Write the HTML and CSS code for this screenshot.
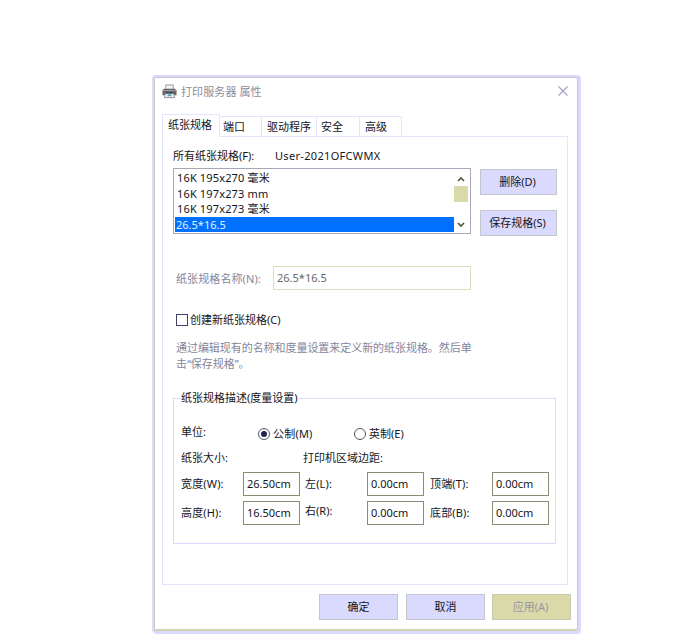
FILE: index.html
```html
<!DOCTYPE html>
<html lang="zh-CN">
<head>
<meta charset="utf-8">
<title>打印服务器 属性</title>
<link rel="stylesheet" href="styles.css">
</head>
<body>
<main class="dialog">
  <header class="titlebar">
    <svg class="printer" viewBox="0 0 16 16">
      <path d="M4 6V1h8v5" fill="#f5f5f7" stroke="#92929c"/>
      <path d="M2 5h12l1.500 2v5H.5V7z" fill="#62626a"/>
      <path d="M1 7h14" stroke="#a5a5ae"/>
      <path d="M3.500 10h9l1 4.500h-11z" fill="#e8edf2" stroke="#8d8d98"/>
      <path d="M4 9.500h8" stroke="#303038"/>
      <path d="M6 11h4v2H6z" fill="#4ba3bd"/>
    </svg>
    <span class="title">打印服务器 属性</span>
    <svg class="close" viewBox="0 0 12 12"><path d="M1.500 1.500l9 9M10.500 1.500l-9 9" fill="none" stroke="#a3a3cc" stroke-width="1.200"/></svg>
  </header>
  <nav class="tabs">
    <div class="tab active">纸张规格</div>
    <div class="tab port">端口</div>
    <div class="tab driver">驱动程序</div>
    <div class="tab security">安全</div>
    <div class="tab advanced">高级</div>
  </nav>
  <section class="panel">
    <div class="server"><span class="server-label">所有纸张规格(F):</span><span class="host">User-2021OFCWMX</span></div>
    <div class="forms">
      <div class="list">
        <div class="options">
          <div class="option">16K 195x270 毫米</div>
          <div class="option">16K 197x273 mm</div>
          <div class="option">16K 197x273 毫米</div>
          <div class="option selected">26.5*16.5</div>
        </div>
        <div class="scrollbar">
          <svg class="arrow" viewBox="0 0 8 6"><path d="M1 5l3-3 3 3" fill="none" stroke="#55553f" stroke-width="1.700"/></svg>
          <div class="thumb"></div>
          <svg class="arrow down" viewBox="0 0 8 6"><path d="M1 1l3 3 3-3" fill="none" stroke="#55553f" stroke-width="1.700"/></svg>
        </div>
      </div>
      <div class="actions">
        <div class="button">删除(D)</div>
        <div class="button">保存规格(S)</div>
      </div>
    </div>
    <div class="name-row"><span class="name-label">纸张规格名称(N):</span><div class="name-input">26.5*16.5</div></div>
    <div class="create"><span class="checkbox"></span><span>创建新纸张规格(C)</span></div>
    <p class="hint">通过编辑现有的名称和度量设置来定义新的纸张规格。然后单<br>击“保存规格”。</p>
    <div class="group">
      <div class="legend">纸张规格描述(度量设置)</div>
      <div class="units">
        <span class="unit-label">单位:</span>
        <span class="radio checked"></span><span class="metric">公制(M)</span>
        <span class="radio"></span><span class="imperial">英制(E)</span>
      </div>
      <div class="heads"><span class="size-head">纸张大小:</span><span>打印机区域边距:</span></div>
      <div class="fields">
        <span>宽度(W):</span><div class="value">26.50cm</div>
        <span class="side">左(L):</span><div class="value">0.00cm</div>
        <span class="edge">顶端(T):</span><div class="value">0.00cm</div>
        <span>高度(H):</span><div class="value">16.50cm</div>
        <span class="side right">右(R):</span><div class="value">0.00cm</div>
        <span class="edge">底部(B):</span><div class="value">0.00cm</div>
      </div>
    </div>
  </section>
  <footer class="footer">
    <div class="button">确定</div>
    <div class="button cancel">取消</div>
    <div class="button disabled">应用(A)</div>
  </footer>
</main>
</body>
</html>
```

FILE: styles.css
```css
* { box-sizing: border-box; }
body {
  margin: 0;
  height: 639px;
  padding: 77px 0 0 154px;
  overflow: hidden;
  background: #fff;
  color: #15151c;
  font: 11px/15px "Noto Sans", "Noto Sans CJK SC", sans-serif;
  white-space: nowrap;
}
.dialog {
  width: 424px;
  height: 554px;
  border: 1px solid #c8c8c6;
  border-bottom: 2px solid #d2d2ae;
  border-radius: 2px;
  box-shadow: 1px 0 0 2px #dadaff, 0 0 0 2px #dadaff, 1px 1px 0 2px #dadaff;
}
.titlebar { display: flex; align-items: center; height: 27px; padding: 0 8px 0 7px; color: #8c8c9b; }
.title { letter-spacing: 0.1px; }
.printer { width: 15px; height: 15px; margin-right: 4px; }
.close { width: 12px; height: 12px; margin: -2px 0 0 auto; }
.tabs { display: flex; align-items: flex-end; height: 22px; margin: 9px 0 0 7px; }
.tab {
  height: 20px;
  padding-left: 5px;
  border: 1px solid #e4e4fc;
  border-width: 1px 1px 0 0;
  line-height: 19px;
}
.tab.active {
  position: relative;
  width: 58px;
  height: 23px;
  margin-bottom: -1px;
  padding-left: 5px;
  border-left-width: 1px;
  background: #fff;
}
.port { width: 42px; padding-left: 3px; }
.driver { width: 55px; }
.security { width: 43px; padding-left: 4px; }
.advanced { width: 42px; }
.panel { width: 406px; height: 449px; margin-left: 7px; padding-left: 10px; border: 1px solid #e4e4fc; }
.server { display: flex; height: 31px; padding-top: 11px; }
.server-label { width: 102px; }
.host { letter-spacing: 0.32px; }
.forms { display: flex; }
.list { display: flex; width: 298px; height: 66px; padding: 1px; border: 1px solid #a7a7b8; }
.options { width: 279px; }
.option { height: 15.5px; padding-left: 2px; line-height: 16px; letter-spacing: 0.15px; }
.selected { padding-left: 1px; background: #0070ff; color: #e3f0ff; line-height: 15px; letter-spacing: 0; }
.scrollbar { display: flex; flex-direction: column; align-items: center; width: 14px; padding: 6px 0 4px; }
.arrow { width: 8px; height: 6px; }
.thumb { width: 14px; height: 16px; margin-top: 4px; background: #d9d9aa; }
.down { margin-top: auto; }
.actions { display: flex; flex-direction: column; gap: 15px; margin: 1px 0 0 9px; }
.button {
  width: 77px;
  height: 26px;
  padding-right: 2px;
  border: 1px solid #c5c5ce;
  background: #dadaff;
  line-height: 24px;
  text-align: center;
}
.name-row { display: flex; margin-top: 30px; padding-left: 3px; }
.name-label { width: 97px; padding-top: 5px; color: #85859c; letter-spacing: 0.1px; }
.name-input { width: 198px; height: 24px; padding-left: 3px; border: 1px solid #dedebd; color: #66666c; line-height: 21px; }
.create { display: flex; align-items: center; height: 15px; margin: 22px 0 0 3px; }
.checkbox { width: 12px; height: 12px; margin-right: 2px; border: 1px solid #424269; }
.hint { margin: 13px 0 0 3px; color: #85859c; line-height: 15.5px; letter-spacing: -0.05px; }
.group { width: 383px; height: 146px; margin-top: 27px; padding-left: 7px; border: 1px solid #dadaff; }
.legend { width: 118px; height: 15px; margin-top: -9px; background: #fff; }
.units { display: flex; align-items: center; height: 15px; margin-top: 21px; }
.unit-label { width: 77px; margin-top: -4px; }
.radio { width: 12px; height: 12px; margin-right: 3px; padding: 2px; border: 1px solid #55555f; border-radius: 50%; }
.checked::before { content: ""; display: block; width: 6px; height: 6px; border-radius: 50%; background: #202052; }
.metric { width: 81px; letter-spacing: 0.2px; }
.heads { display: flex; margin-top: 9px; }
.size-head { width: 122px; }
.fields {
  display: grid;
  grid-template-columns: 62px 57px 67px 57px 68px 57px;
  row-gap: 5px;
  margin-top: 7px;
  align-items: center;
}
.fields > span:not(.right) { margin-top: -1px; letter-spacing: 0.15px; }
.side { padding-left: 5px; }
.edge { padding-left: 6px; }
.fields > .right { margin-top: -5px; }
.value { height: 24px; padding-left: 3px; border: 1px solid #8b8b74; line-height: 21px; }
.footer { display: flex; gap: 8px; margin: 9px 0 0 164px; }
.footer .button { width: 79px; padding-right: 0; }
.footer .cancel { margin-right: -1px; }
.footer .disabled { padding-right: 2px; border-color: #c9c9ae; background: #d9d9aa; color: #9797a0; }
```
